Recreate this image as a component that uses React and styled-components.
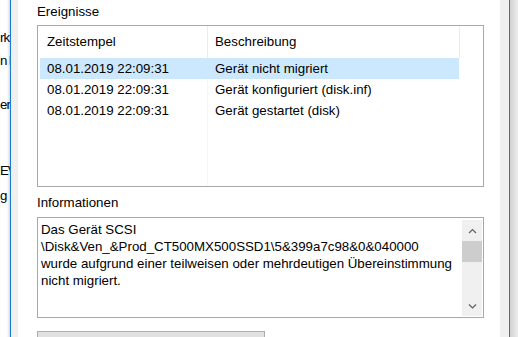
import styled, { createGlobalStyle } from 'styled-components';

const GlobalStyle = createGlobalStyle`
  *, *::before, *::after { box-sizing: border-box; }
  html, body { margin: 0; padding: 0; background: #fff; }
  body {
    font-family: "Liberation Sans", Arial, sans-serif;
    font-size: 13.3px;
    color: #000;
  }
`;

const BACK_ITEMS = [
  { text: 'rk', gap: 30 },
  { text: 'n l', gap: 7 },
  { text: 'er', gap: 28 },
  { text: 'EV', gap: 50 },
  { text: 'g', gap: 9 },
];

const EVENTS = [
  { time: '08.01.2019 22:09:31', text: 'Gerät nicht migriert', selected: true },
  { time: '08.01.2019 22:09:31', text: 'Gerät konfiguriert (disk.inf)' },
  { time: '08.01.2019 22:09:31', text: 'Gerät gestartet (disk)' },
];

const INFO = [
  'Das Gerät SCSI',
  '\\Disk&Ven_&Prod_CT500MX500SSD1\\5&399a7c98&0&040000',
  'wurde aufgrund einer teilweisen oder mehrdeutigen Übereinstimmung',
  'nicht migriert.',
];

const Screen = styled.div`
  display: flex;
  width: 518px;
  height: 337px;
  overflow: hidden;
`;

const BackWindow = styled.div`
  flex: none;
  width: 10px;
  display: flex;
  flex-direction: column;
  overflow: hidden;
  background: #fff;
  box-shadow: inset -3px 0 3px -2px rgba(0, 0, 0, 0.2);
`;

const BackItem = styled.div`
  margin-top: ${p => p.$gap}px;
  height: 16px;
  line-height: 16px;
  white-space: nowrap;
  letter-spacing: -1px;
`;

const Dialog = styled.div`
  flex: none;
  width: 500px;
  display: flex;
  padding: 0 9px 0 7px;
  background: #f0f0f0;
  border-left: 1px solid #1a7bd5;
  border-right: 1px solid #1a7bd5;
`;

const Shadow = styled.div`
  flex: 1;
  background: linear-gradient(to right, #d2d2d2, #ececec);
`;

const Page = styled.div`
  flex: 1;
  display: flex;
  flex-direction: column;
  padding: 4px 0 0 19px;
  background: #fff;
  overflow: hidden;
`;

const Caption = styled.div`
  height: 16px;
  line-height: 16px;
  margin-top: ${p => p.$gap || 0}px;
`;

const ListBox = styled.div`
  flex: none;
  width: 447px;
  height: 162px;
  margin-top: 5px;
  padding-left: 2px;
  border: 1px solid #a8a8a8;
  display: flex;
  flex-direction: column;
  overflow: hidden;
`;

const Header = styled.div`
  display: flex;
  height: 32px;
  flex: none;
`;

const HeaderCell = styled.div`
  width: ${p => p.$width}px;
  padding-left: 7px;
  line-height: 32px;
  border-right: 1px solid #ececec;
`;

const Body = styled.div`
  flex: 1;
  background: linear-gradient(
    to right,
    transparent 167px,
    #f4f6f9 167px,
    #f4f6f9 168px,
    transparent 168px
  );
`;

const Row = styled.div`
  display: flex;
  width: 419px;
  height: 21px;
  background: ${p => (p.$selected ? '#cce8ff' : 'transparent')};
`;

const Cell = styled.div`
  width: ${p => p.$width}px;
  padding-left: 7px;
  line-height: 21px;
  white-space: nowrap;
`;

const InfoBox = styled.div`
  flex: none;
  width: 447px;
  height: 101px;
  margin-top: 6px;
  border: 1px solid #a8a8a8;
  display: flex;
`;

const InfoText = styled.div`
  flex: 1;
  padding: 3px 0 0 3px;
  line-height: 17px;
  white-space: pre;
  overflow: hidden;
`;

const ScrollBar = styled.div`
  flex: none;
  width: 20px;
  margin: 2px 1px 1px 0;
  display: flex;
  flex-direction: column;
  background: #f0f0f0;
`;

const ScrollButton = styled.div`
  height: 21px;
  display: flex;
  align-items: center;
  justify-content: center;
  margin-top: ${p => (p.$bottom ? 'auto' : '0')};
`;

const Thumb = styled.div`
  height: 21px;
  background: #cdcdcd;
`;

const PushButton = styled.div`
  flex: none;
  width: 228px;
  height: 30px;
  margin-top: 13px;
  background: #e1e1e1;
  border: 1px solid #adadad;
`;

const Chevron = ({ down }) => (
  <svg width="9" height="6" viewBox="0 0 9 6">
    <polyline
      points={down ? '1,1.5 4.5,5 8,1.5' : '1,5 4.5,1.5 8,5'}
      fill="none"
      stroke="#606060"
      strokeWidth="1.2"
    />
  </svg>
);

export default function App() {
  return (
    <>
      <GlobalStyle />
      <Screen>
        <BackWindow>
          {BACK_ITEMS.map((item, i) => (
            <BackItem key={i} $gap={item.gap}>{item.text}</BackItem>
          ))}
        </BackWindow>
        <Dialog>
          <Page>
            <Caption>Ereignisse</Caption>
            <ListBox>
              <Header>
                <HeaderCell $width={168}>Zeitstempel</HeaderCell>
                <HeaderCell $width={252}>Beschreibung</HeaderCell>
              </Header>
              <Body>
                {EVENTS.map((ev, i) => (
                  <Row key={i} $selected={ev.selected}>
                    <Cell $width={168}>{ev.time}</Cell>
                    <Cell $width={251}>{ev.text}</Cell>
                  </Row>
                ))}
              </Body>
            </ListBox>
            <Caption $gap={8}>Informationen</Caption>
            <InfoBox>
              <InfoText>{INFO.join('\n')}</InfoText>
              <ScrollBar>
                <ScrollButton><Chevron /></ScrollButton>
                <Thumb />
                <ScrollButton $bottom><Chevron down /></ScrollButton>
              </ScrollBar>
            </InfoBox>
            <PushButton />
          </Page>
        </Dialog>
        <Shadow />
      </Screen>
    </>
  );
}
